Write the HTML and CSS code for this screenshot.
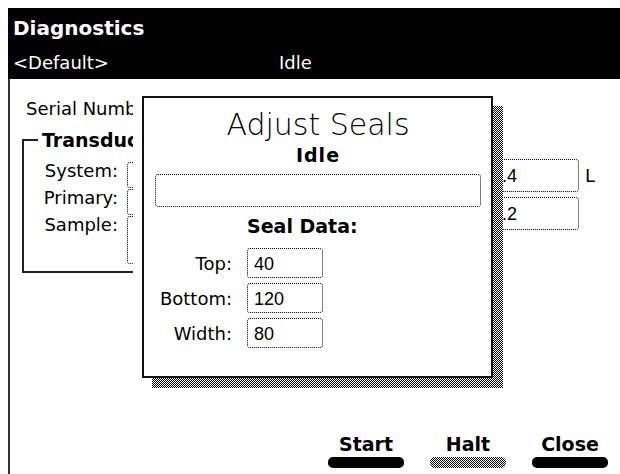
FILE: index.html
```html
<!DOCTYPE html>
<html lang="en">
<head>
  <meta charset="UTF-8">
  <title>Diagnostics</title>
  <meta name="viewport" content="width=device-width, initial-scale=1.0">
  <link rel="stylesheet" href="styles.css">
</head>
<body>

  <div class="screen">
    <header class="titlebar">
      <div class="title">Diagnostics</div>
      <div class="status">
        <span>&lt;Default&gt;</span>
        <span>Idle</span>
      </div>
    </header>

    <main class="content">
      <div class="panes">
        <div class="left-pane">
          <div class="serial">Serial Number: 000412</div>
          <fieldset class="group">
            <legend>Transducers</legend>
            <div class="field-row">
              <span class="field-label">System:</span>
              <span class="field-box"></span>
            </div>
            <div class="field-row">
              <span class="field-label">Primary:</span>
              <span class="field-box"></span>
            </div>
            <div class="field-row">
              <span class="field-label">Sample:</span>
              <span class="field-box tall"></span>
            </div>
          </fieldset>
        </div>

        <div class="right-pane">
          <div class="unit-row">
            <span class="value-box">0.4</span>
            <span class="unit">L</span>
          </div>
          <div class="unit-row">
            <span class="value-box">0.2</span>
          </div>
        </div>
      </div>

      <div class="actions">
        <div class="action">
          <span class="action-label">Start</span>
          <span class="action-bar"></span>
        </div>
        <div class="action">
          <span class="action-label">Halt</span>
          <span class="action-bar disabled"></span>
        </div>
        <div class="action">
          <span class="action-label">Close</span>
          <span class="action-bar"></span>
        </div>
      </div>
    </main>
  </div>

  <!-- floating dialog over the diagnostics view -->
  <div class="popup">
    <div class="popup-shadow"></div>
    <div class="popup-box">
      <div class="popup-title">Adjust Seals</div>
      <div class="popup-state">Idle</div>
      <div class="message-box"></div>
      <div class="section-title">Seal Data:</div>
      <div class="seal-grid">
        <span class="seal-label">Top:</span>
        <span class="seal-box">40</span>
        <span class="seal-label">Bottom:</span>
        <span class="seal-box">120</span>
        <span class="seal-label">Width:</span>
        <span class="seal-box">80</span>
      </div>
    </div>
  </div>

</body>
</html>
```

FILE: styles.css
```css
body {
  margin: 0;
  font-family: "DejaVu Sans", sans-serif;
  font-size: 18px;
  color: #000;
  background-color: #fff;
  overflow: hidden;
}

.screen {
  margin: 8px 0 0 8px;
  height: 466px;
  display: flex;
  flex-direction: column;
}

.titlebar {
  background-color: #000;
  color: #fff;
  padding: 8px 0 5px 5px;
}

.title {
  font-weight: bold;
  font-size: 20px;
  line-height: 24px;
}

.status {
  display: grid;
  grid-template-columns: 266px auto;
  margin-top: 12px;
  line-height: 22px;
}

.content {
  flex: 1;
  border-left: 2px solid #333;
  display: flex;
  flex-direction: column;
}

.panes {
  display: flex;
  align-items: flex-start;
}

.left-pane {
  width: 107px;
  padding: 20px 0 0 16px;
  overflow: hidden;
  flex-shrink: 0;
}

.serial {
  line-height: 20px;
  white-space: nowrap;
  margin-bottom: 10px;
}

.group {
  width: 400px;
  margin: 0 0 0 -4px;
  border: 2px solid #222;
  padding: 11px 0 6px 14px;
}

.group legend {
  font-weight: bold;
  font-size: 19px;
  line-height: 22px;
  padding: 0 4px;
  white-space: nowrap;
}

.field-row {
  display: flex;
  align-items: flex-start;
  gap: 9px;
  margin-bottom: 1px;
}

.field-label {
  width: 80px;
  text-align: right;
  line-height: 18px;
}

.field-box {
  width: 200px;
  height: 26px;
  box-sizing: border-box;
  border: 1px dotted #000;
  border-radius: 3px;
}

.field-box.tall {
  height: 48px;
}

.right-pane {
  margin: 80px 0 0 352px;
  display: flex;
  flex-direction: column;
  gap: 5px;
}

.unit-row {
  display: flex;
  align-items: center;
  gap: 6px;
}

.value-box {
  width: 94px;
  height: 33px;
  box-sizing: border-box;
  border: 1px dotted #000;
  border-radius: 3px;
  padding: 2px 0 0 6px;
  font-family: "Liberation Sans", sans-serif;
  font-size: 18px;
  line-height: 29px;
}

.unit {
  line-height: 20px;
}

.actions {
  margin-top: auto;
  display: flex;
  justify-content: flex-end;
  gap: 26px;
  padding: 0 12px 6px 0;
}

.action {
  width: 76px;
  display: flex;
  flex-direction: column;
  align-items: center;
  gap: 2px;
}

.action-label {
  font-weight: bold;
  font-size: 19px;
  line-height: 22px;
}

.action-bar {
  width: 100%;
  height: 11px;
  border-radius: 5px;
  background-color: #000;
}

.action-bar.disabled {
  background: repeating-conic-gradient(#000 0 25%, #fff 0 50%) 0 0 / 2px 2px;
}

.popup {
  position: absolute;
  left: 142px;
  top: 96px;
  width: 351px;
  height: 282px;
}

.popup-shadow {
  position: absolute;
  left: 10px;
  top: 10px;
  width: 100%;
  height: 100%;
  background: repeating-conic-gradient(#000 0 25%, #fff 0 50%) 0 0 / 2px 2px;
}

.popup-box {
  position: relative;
  height: 100%;
  box-sizing: border-box;
  border: 2px solid #111;
  background-color: #fff;
  padding: 10px 10px 0 11px;
}

.popup-title {
  text-align: center;
  font-size: 30px;
  font-weight: 200;
  line-height: 34px;
}

.popup-state {
  text-align: center;
  font-weight: bold;
  font-size: 19px;
  line-height: 22px;
  letter-spacing: 1px;
  margin-top: 2px;
}

.message-box {
  height: 33px;
  box-sizing: border-box;
  border: 1px dotted #000;
  border-radius: 3px;
  margin-top: 8px;
}

.section-title {
  font-weight: bold;
  font-size: 19px;
  line-height: 22px;
  margin-top: 8px;
  padding-left: 92px;
}

.seal-grid {
  display: grid;
  grid-template-columns: 77px 76px;
  grid-auto-rows: 30px;
  column-gap: 15px;
  row-gap: 5px;
  margin-top: 11px;
  align-items: center;
}

.seal-label {
  text-align: right;
}

.seal-box {
  height: 30px;
  box-sizing: border-box;
  border: 1px dotted #000;
  border-radius: 3px;
  padding: 2px 0 0 6px;
  font-family: "Liberation Sans", sans-serif;
  font-size: 18px;
  line-height: 26px;
}
```
